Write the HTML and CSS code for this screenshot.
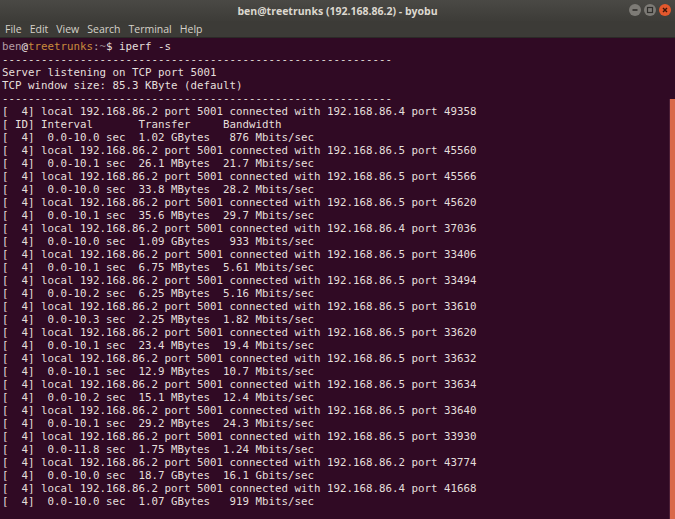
FILE: index.html
```html
<!DOCTYPE html>
<html lang="en">
<head>
    <meta charset="UTF-8">
    <title>ben@treetrunks (192.168.86.2) - byobu</title>
    <link rel="stylesheet" href="styles.css">
</head>
<body>
    <div class="window">
        <div class="titlebar">
            <span class="title">ben@treetrunks (192.168.86.2) - byobu</span>
            <div class="controls">
                <span class="btn btn-min">
                    <svg width="12" height="12" viewBox="0 0 12 12"><line x1="3.5" y1="6" x2="8.5" y2="6" stroke="#2f2e2b" stroke-width="1.6"/></svg>
                </span>
                <span class="btn btn-max">
                    <svg width="12" height="12" viewBox="0 0 12 12"><rect x="3.5" y="3.5" width="5" height="5" fill="none" stroke="#2f2e2b" stroke-width="1.2"/></svg>
                </span>
                <span class="btn btn-close">
                    <svg width="12" height="12" viewBox="0 0 12 12"><path d="M4 4 L8 8 M8 4 L4 8" stroke="#3a1408" stroke-width="1.4"/></svg>
                </span>
            </div>
        </div>

        <div class="menubar">
            <span>File</span>
            <span>Edit</span>
            <span>View</span>
            <span>Search</span>
            <span>Terminal</span>
            <span>Help</span>
        </div>

        <div class="terminal">
<pre class="output"><span class="p-user">ben</span><span class="p-at">@</span><span class="p-host">treetrunks</span><span class="p-sep">:</span><span class="p-dir">~</span>$ iperf -s
------------------------------------------------------------
Server listening on TCP port 5001
TCP window size: 85.3 KByte (default)
------------------------------------------------------------
[  4] local 192.168.86.2 port 5001 connected with 192.168.86.4 port 49358
[ ID] Interval       Transfer     Bandwidth
[  4]  0.0-10.0 sec  1.02 GBytes   876 Mbits/sec
[  4] local 192.168.86.2 port 5001 connected with 192.168.86.5 port 45560
[  4]  0.0-10.1 sec  26.1 MBytes  21.7 Mbits/sec
[  4] local 192.168.86.2 port 5001 connected with 192.168.86.5 port 45566
[  4]  0.0-10.0 sec  33.8 MBytes  28.2 Mbits/sec
[  4] local 192.168.86.2 port 5001 connected with 192.168.86.5 port 45620
[  4]  0.0-10.1 sec  35.6 MBytes  29.7 Mbits/sec
[  4] local 192.168.86.2 port 5001 connected with 192.168.86.4 port 37036
[  4]  0.0-10.0 sec  1.09 GBytes   933 Mbits/sec
[  4] local 192.168.86.2 port 5001 connected with 192.168.86.5 port 33406
[  4]  0.0-10.1 sec  6.75 MBytes  5.61 Mbits/sec
[  4] local 192.168.86.2 port 5001 connected with 192.168.86.5 port 33494
[  4]  0.0-10.2 sec  6.25 MBytes  5.16 Mbits/sec
[  4] local 192.168.86.2 port 5001 connected with 192.168.86.5 port 33610
[  4]  0.0-10.3 sec  2.25 MBytes  1.82 Mbits/sec
[  4] local 192.168.86.2 port 5001 connected with 192.168.86.5 port 33620
[  4]  0.0-10.1 sec  23.4 MBytes  19.4 Mbits/sec
[  4] local 192.168.86.2 port 5001 connected with 192.168.86.5 port 33632
[  4]  0.0-10.1 sec  12.9 MBytes  10.7 Mbits/sec
[  4] local 192.168.86.2 port 5001 connected with 192.168.86.5 port 33634
[  4]  0.0-10.2 sec  15.1 MBytes  12.4 Mbits/sec
[  4] local 192.168.86.2 port 5001 connected with 192.168.86.5 port 33640
[  4]  0.0-10.1 sec  29.2 MBytes  24.3 Mbits/sec
[  4] local 192.168.86.2 port 5001 connected with 192.168.86.5 port 33930
[  4]  0.0-11.8 sec  1.75 MBytes  1.24 Mbits/sec
[  4] local 192.168.86.2 port 5001 connected with 192.168.86.2 port 43774
[  4]  0.0-10.0 sec  18.7 GBytes  16.1 Gbits/sec
[  4] local 192.168.86.2 port 5001 connected with 192.168.86.4 port 41668
[  4]  0.0-10.0 sec  1.07 GBytes   919 Mbits/sec</pre>
            <div class="scrollbar"></div>
        </div>
    </div>
</body>
</html>
```

FILE: styles.css
```css
html, body {
    margin: 0;
    padding: 0;
    background: #300a24;
}

.window {
    width: 675px;
    height: 519px;
    display: flex;
    flex-direction: column;
    overflow: hidden;
}

.titlebar {
    height: 21px;
    flex: none;
    position: relative;
    display: flex;
    align-items: center;
    justify-content: center;
    background: linear-gradient(#4a4945, #3d3c38);
}

.title {
    font-family: "Open Sans", "DejaVu Sans", sans-serif;
    font-weight: 700;
    font-size: 10.5px;
    color: #dcd8cf;
}

.controls {
    position: absolute;
    right: 4px;
    top: 4px;
    display: flex;
    gap: 3px;
}

.btn {
    width: 12px;
    height: 12px;
    border-radius: 50%;
    display: flex;
}

.btn-min,
.btn-max {
    background: #7d7b76;
}

.btn-close {
    background: #e4582d;
}

.menubar {
    height: 16px;
    flex: none;
    display: flex;
    align-items: center;
    gap: 8px;
    padding: 0 0 0 5px;
    background: #3c3b37;
    border-bottom: 1px solid #2b2a27;
    font-family: "Open Sans", "DejaVu Sans", sans-serif;
    font-size: 10.5px;
    color: #d6d2c9;
}

.terminal {
    flex: 1;
    display: flex;
    background: #300a24;
}

.output {
    flex: 1;
    margin: 0;
    padding: 2px 0 0 2px;
    font-family: "DejaVu Sans Mono", monospace;
    font-size: 10.8px;
    line-height: 13px;
    color: #e4dfdb;
    white-space: pre;
}

.p-user { color: #b49ca4; }
.p-at { color: #ece6e2; }
.p-host { color: #c88a3c; }
.p-sep { color: #b8a8ac; }
.p-dir { color: #8f7f88; }

.scrollbar {
    width: 5px;
    flex: none;
    margin-top: 61px;
    background: #d9694a;
    border-left: 1px solid #4a1e36;
}
```
